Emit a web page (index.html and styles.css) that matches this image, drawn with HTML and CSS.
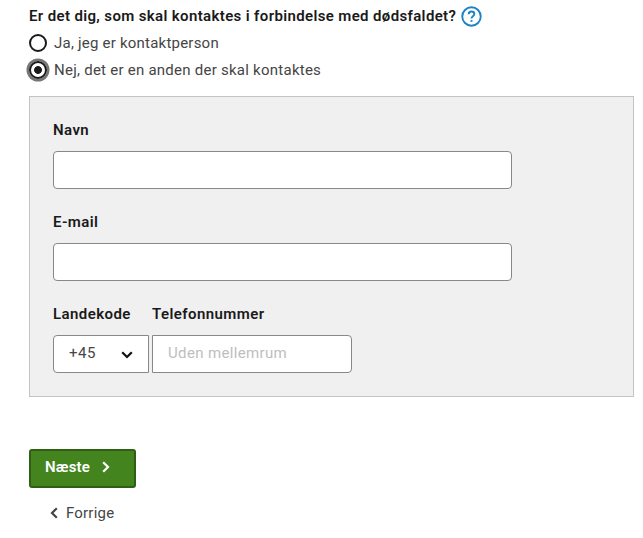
FILE: index.html
```
<!DOCTYPE html>
<html lang="da">
<head>
    <meta charset="UTF-8">
    <meta name="viewport" content="width=device-width, initial-scale=1.0">
    <title>Kontaktperson</title>
    <link rel="stylesheet" href="styles.css">
</head>
<body>

<form id="contactForm">
    <div class="question">
        <span class="question-text">Er det dig, som skal kontaktes i forbindelse med dødsfaldet?</span>
        <svg class="help" viewBox="0 0 20 20">
            <circle cx="10" cy="10" r="8.8"/>
            <path d="M7.3 7.9C7.3 6.2 8.4 5.3 10 5.3s2.7 1 2.7 2.4c0 2-2.7 2-2.7 4.1"/>
            <path d="M10 13.4v1.7"/>
        </svg>
    </div>

    <label class="radio">
        <input type="radio" name="contact" value="yes">
        <span class="radio-yes">Ja, jeg er kontaktperson</span>
    </label>
    <label class="radio">
        <input type="radio" name="contact" value="no" checked>
        <span class="radio-no">Nej, det er en anden der skal kontaktes</span>
    </label>

    <div class="panel">
        <div class="field">
            <label for="name">Navn</label>
            <input type="text" id="name">
        </div>
        <div class="field">
            <label for="email">E-mail</label>
            <input type="text" id="email">
        </div>
        <div class="phone-row">
            <div class="field country">
                <label for="country">Landekode</label>
                <div class="select" id="country">
                    <span>+45</span>
                    <svg class="chevron" viewBox="0 0 12 8"><path d="M1.2 1.2L6 6l4.8-4.8"/></svg>
                </div>
            </div>
            <div class="field number">
                <label for="phone">Telefonnummer</label>
                <input type="text" id="phone" placeholder="Uden mellemrum">
            </div>
        </div>
    </div>

    <button type="submit" class="next">
        <span>Næste</span>
        <svg viewBox="0 0 8 12"><path d="M1.2 1.2L6 6l-4.8 4.8"/></svg>
    </button>
    <a class="previous">
        <svg viewBox="0 0 8 12"><path d="M6.8 1.2L2 6l4.8 4.8"/></svg>
        <span>Forrige</span>
    </a>
</form>

</body>
</html>
```
FILE: styles.css
```
* {
    box-sizing: border-box;
}

body {
    margin: 0;
    padding: 3px 9px 0 29px;
    font-family: Roboto, "Liberation Sans", sans-serif;
    font-size: 15px;
    line-height: 26px;
    color: #454545;
    background-color: #fff;
}

svg {
    fill: none;
    stroke: currentColor;
    flex: none;
}

.question {
    display: flex;
    align-items: center;
    gap: 4px;
    height: 26px;
    font-weight: 600;
    color: #1a1a1a;
}

.question-text {
    width: 428px;
    white-space: nowrap;
    letter-spacing: 0.36px;
}

.help {
    width: 21px;
    height: 21px;
    stroke: #1c83c6;
    stroke-width: 1.8;
}

.radio {
    display: flex;
    align-items: center;
    gap: 7px;
    height: 27px;
    white-space: nowrap;
}

.radio input {
    appearance: none;
    width: 18px;
    height: 18px;
    margin: 1px 0 0;
    border: 2px solid #1a1a1a;
    border-radius: 50%;
    background-color: #fff;
}

.radio input:checked {
    background: radial-gradient(circle, #1a1a1a 3.5px, #fff 4.3px);
    box-shadow: 0 0 0 2.5px #767676;
}

.radio-yes {
    letter-spacing: 0.22px;
}

.radio-no {
    letter-spacing: 0.25px;
}

.panel {
    height: 301px;
    margin-top: 13px;
    padding: 20px 23px;
    border: 1px solid #c4c4c4;
    background-color: #f0f0f0;
}

.field {
    display: flex;
    flex-direction: column;
    height: 92px;
    width: 459px;
}

.field label {
    height: 34px;
    font-weight: 600;
    color: #1a1a1a;
    letter-spacing: 0.42px;
    white-space: nowrap;
}

.field input,
.select {
    width: 100%;
    height: 38px;
    padding: 0 15px;
    border: 1px solid #888;
    border-radius: 4px;
    background-color: #fff;
    font: inherit;
    line-height: 34px;
    color: #454545;
}

.field input::placeholder {
    color: #bebebe;
    opacity: 1;
    letter-spacing: 0.35px;
}

.phone-row {
    display: flex;
    gap: 3px;
}

.field.country {
    width: 96px;
}

.field.number {
    width: 200px;
}

.select {
    display: flex;
    justify-content: space-between;
    border-radius: 4px 0 0 4px;
    letter-spacing: 0.5px;
}

.number input {
    border-radius: 0 4px 4px 0;
    padding-bottom: 3px;
}

.chevron {
    width: 12px;
    height: 8px;
    margin-top: 15px;
    stroke: #111;
    stroke-width: 2.2;
}

.next {
    display: flex;
    align-items: center;
    gap: 12px;
    width: 107px;
    height: 39px;
    margin-top: 52px;
    padding: 0 14px 3px;
    border: 2px solid #2f5e14;
    border-radius: 3px;
    background-color: #43841f;
    color: #fff;
    font: inherit;
    font-weight: 600;
    letter-spacing: 0.2px;
}

.next svg,
.previous svg {
    width: 8px;
    height: 12px;
    stroke-width: 2.2;
}

.previous {
    display: flex;
    align-items: center;
    gap: 8px;
    margin: 12px 0 0 21px;
    letter-spacing: 0.2px;
}
```
